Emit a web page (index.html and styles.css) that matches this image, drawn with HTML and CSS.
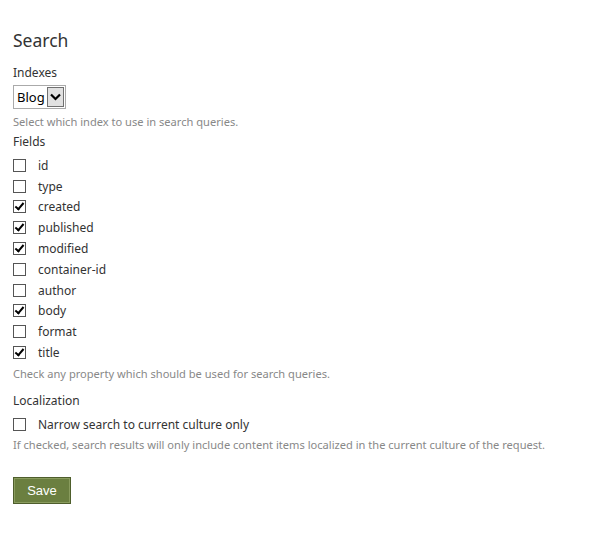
FILE: index.html
```html
<!DOCTYPE html>
<html>
<head>
<meta charset="utf-8">
<link rel="stylesheet" href="styles.css">
</head>
<body>
<div class="page">
  <h2 class="title">Search</h2>
  <fieldset class="group">
    <label class="label label-index">Indexes</label>
    <div class="select">
      <span class="select-value">Blog</span>
      <span class="select-btn">
        <svg width="11" height="8" viewBox="0 0 11 8"><path d="M1 1.5 L5.5 6 L10 1.5" fill="none" stroke="#000" stroke-width="2.2"/></svg>
      </span>
    </div>
    <span class="hint hint-index">Select which index to use in search queries.</span>
  </fieldset>
  <fieldset class="group">
    <label class="label label-fields">Fields</label>
    <ul class="fields">
      <li class="row"><span class="box"></span><span>id</span></li>
      <li class="row"><span class="box"></span><span>type</span></li>
      <li class="row"><span class="box checked"></span><span>created</span></li>
      <li class="row"><span class="box checked"></span><span>published</span></li>
      <li class="row"><span class="box checked"></span><span>modified</span></li>
      <li class="row"><span class="box"></span><span>container-id</span></li>
      <li class="row"><span class="box"></span><span>author</span></li>
      <li class="row"><span class="box checked"></span><span>body</span></li>
      <li class="row"><span class="box"></span><span>format</span></li>
      <li class="row"><span class="box checked"></span><span>title</span></li>
    </ul>
    <span class="hint">Check any property which should be used for search queries.</span>
  </fieldset>
  <fieldset class="group loc">
    <label class="label">Localization</label>
    <div class="row narrow"><span class="box"></span><span>Narrow search to current culture only</span></div>
    <span class="hint">If checked, search results will only include content items localized in the current culture of the request.</span>
  </fieldset>
  <button class="save">Save</button>
</div>
</body>
</html>
```
FILE: styles.css
```css
html, body { margin: 0; padding: 0; background: #fff; }
body {
  font-family: "Noto Sans", "Open Sans", sans-serif;
  color: #333;
  font-size: 12px;
}
.page { padding: 28px 13px 0 13px; }
.title {
  font-weight: normal;
  font-size: 17.5px;
  margin: 0 0 12px 0;
  line-height: 24px;
  color: #333;
}
.group { border: 0; margin: 0; padding: 0; display: flex; flex-direction: column; align-items: flex-start; }
.label { font-size: 12px; line-height: 18px; color: #333; margin-bottom: 5px; }
.label-index { margin-bottom: 3px; }
.label-fields { margin-bottom: 4px; }
.select {
  display: flex;
  align-items: center;
  border: 1px solid #aaa;
  height: 22px;
  padding: 0 1px 0 3px;
  box-sizing: content-box;
  gap: 2px;
}
.select-value { font-size: 13px; color: #000; line-height: 20px; }
.select-btn {
  width: 15px; height: 18px;
  border: 1px solid #707070;
  background: #e1e1e1;
  display: flex; align-items: center; justify-content: center;
}
.hint { font-size: 11.1px; color: #888; line-height: 16px; margin-top: 3px; margin-bottom: 4px; }
.hint-index { margin-top: 5px; margin-bottom: 3px; }
.fields { list-style: none; margin: 0; padding: 0; }
.row { display: flex; align-items: center; height: 20.8px; gap: 12px; }
.box {
  width: 11px; height: 11px;
  border: 1px solid #555;
  background: #fff;
  position: relative;
  flex: none;
}
.box.checked::after {
  content: "";
  position: absolute;
  left: 3px; top: 0px;
  width: 3px; height: 7px;
  border: solid #000;
  border-width: 0 2px 2px 0;
  transform: rotate(40deg);
}
.loc { margin-top: 6px; }
.narrow { height: 19px; }
.save {
  margin-top: 20px;
  width: 58px; height: 27px;
  background: #6b7f40;
  border: 1px solid #4e5e2c;
  box-shadow: inset 0 0 0 1px #8a9c5e;
  color: #fff;
  font-family: "Liberation Sans", Arial, sans-serif;
  font-size: 13px;
  padding: 0;
}
```
